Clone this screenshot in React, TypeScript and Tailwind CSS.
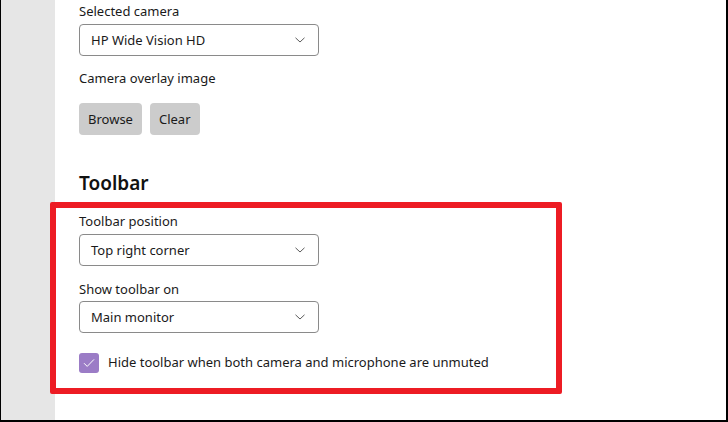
import React from 'react';

const font = { fontFamily: '"Segoe UI", "Noto Sans", sans-serif' };

const Chevron = () => (
  <svg width="12" height="8" viewBox="0 0 12 8" fill="none" className="text-[#5c5c5c]">
    <path d="M1.5 1.8 L6 6 L10.5 1.8" stroke="currentColor" strokeWidth="1" />
  </svg>
);

const Select: React.FC<{ value: string }> = ({ value }) => (
  <div className="w-[240px] h-[32px] border border-[#8a8a8a] rounded-[4px] bg-white flex items-center justify-between pl-[11px] pr-[12px] text-[13px] text-[#1a1a1a]">
    <span className="pt-[1px]">{value}</span>
    <Chevron />
  </div>
);

const Label: React.FC<{ children: React.ReactNode }> = ({ children }) => (
  <div className="h-[20px] leading-[20px] text-[13px] text-[#1a1a1a]">{children}</div>
);

export default function App() {
  return (
    <div
      className="relative w-[728px] h-[422px] bg-white border-l border-r-2 border-b-2 border-black flex overflow-hidden"
      style={font}
    >
      <div className="w-[54px] shrink-0 bg-[#e6e6e6]" />
      <div className="pl-[24px] pt-[1px] flex flex-col">
        <Label>Selected camera</Label>
        <div className="mt-[3px]">
          <Select value="HP Wide Vision HD" />
        </div>
        <div className="mt-[12px]">
          <Label>Camera overlay image</Label>
        </div>
        <div className="mt-[15px] flex gap-[8px]">
          <button className="h-[32px] px-[9px] pt-[1px] bg-[#cccccc] rounded-[4px] text-[13px] text-[#1a1a1a]">Browse</button>
          <button className="h-[32px] px-[9px] pt-[1px] bg-[#cccccc] rounded-[4px] text-[13px] text-[#1a1a1a]">Clear</button>
        </div>
        <div className="mt-[34px] h-[28px] leading-[28px] text-[19px] font-semibold text-[#111]">Toolbar</div>
        <div className="mt-[14px]">
          <Label>Toolbar position</Label>
        </div>
        <div className="mt-[3px]">
          <Select value="Top right corner" />
        </div>
        <div className="mt-[13px]">
          <Label>Show toolbar on</Label>
        </div>
        <div className="mt-[2px]">
          <Select value="Main monitor" />
        </div>
        <div className="mt-[20px] flex items-center gap-[9px]">
          <div className="w-[20px] h-[20px] rounded-[3px] bg-[#9b7cc6] flex items-center justify-center">
            <svg width="12" height="10" viewBox="0 0 12 10" fill="none">
              <path d="M1 5.2 L4.2 8.4 L11 1.4" stroke="white" strokeWidth="1" />
            </svg>
          </div>
          <span className="text-[13px] text-[#1a1a1a]">Hide toolbar when both camera and microphone are unmuted</span>
        </div>
      </div>
      <div className="absolute left-[49px] top-[202px] w-[512px] h-[192px] border-[6px] border-[#ed1c24] rounded-[2px] pointer-events-none" />
    </div>
  );
}
